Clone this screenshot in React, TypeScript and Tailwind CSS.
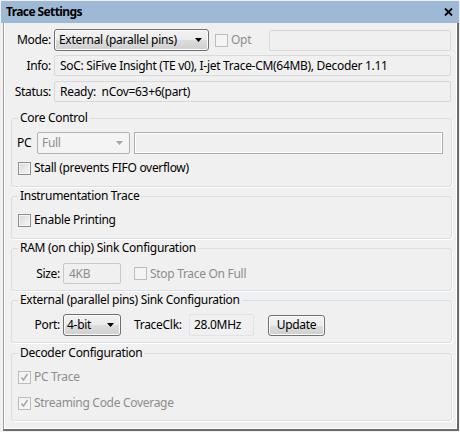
import clsx from 'clsx';
import type { ReactNode } from 'react';

function Arrow({ disabled }: { disabled?: boolean }) {
  return (
    <svg width="7" height="4" viewBox="0 0 7 4" className="shrink-0">
      <path d="M0 0h7L3.5 4z" fill={disabled ? '#a6a6a6' : '#000'} />
    </svg>
  );
}

function Checkbox({ checked, disabled }: { checked?: boolean; disabled?: boolean }) {
  return (
    <span
      className={clsx(
        'flex h-[13px] w-[13px] shrink-0 items-center justify-center border',
        disabled
          ? 'border-[#bcbcbc] bg-[#f4f4f4]'
          : 'border-[#8e8f8f] bg-[linear-gradient(135deg,#d6d9de,#f7f7f7)] shadow-[inset_0_0_0_1px_#f4f4f4]'
      )}
    >
      {checked && (
        <svg width="9" height="9" viewBox="0 0 9 9">
          <path d="M1.5 4.5l2 2.5 4-6" fill="none" stroke="#a3a3a3" strokeWidth="1.4" />
        </svg>
      )}
    </span>
  );
}

function Group({ title, className, children }: { title: string; className: string; children: ReactNode }) {
  return (
    <fieldset
      className={clsx(
        'ml-[7px] mr-[5px] rounded-[3px] border border-[#d5dfe5] shadow-[1px_1px_0_#ffffff]',
        className
      )}
    >
      <legend className="ml-[6px] px-[2px] leading-[16px] text-[#000]">{title}</legend>
      {children}
    </fieldset>
  );
}

export default function App() {
  return (
    <div className="flex h-[432px] w-[460px] flex-col bg-[#f0f0f0] p-px font-['Noto_Sans','Open_Sans',sans-serif] text-[12px] leading-[16px] tracking-[-0.3px] text-[#000]">
      <div className="flex h-[22px] shrink-0 items-center justify-between bg-[#9db9d6] pl-[5px] pr-[6px]">
        <span className="font-bold tracking-[-0.6px]">Trace Settings</span>
        <svg width="9" height="8" viewBox="0 0 9 8">
          <path d="M1 0.5l7 7M8 0.5l-7 7" stroke="#000" strokeWidth="1.8" />
        </svg>
      </div>

      <div className="flex flex-1 flex-col pl-[2px]">
        <div className="flex flex-1 flex-col border-b-2 border-l border-r-2 border-[#a0a0a0] border-b-[#6b6b6b] border-r-[#6b6b6b] shadow-[inset_-1px_-1px_0_#ffffff,inset_1px_0_0_#ffffff]">
          <div className="mt-[6px] flex h-[22px] items-center pr-[6px]">
            <span className="w-[47px] text-right">Mode:</span>
            <div className="ml-[3px] flex h-[22px] w-[155px] items-center justify-between rounded-[3px] border border-[#707070] bg-[linear-gradient(#f2f2f2_0%,#ebebeb_50%,#dddddd_51%,#cfcfcf_100%)] pl-[4px] pr-[6px] shadow-[inset_0_0_0_1px_#fbfbfb]">
              <span>External (parallel pins)</span>
              <Arrow />
            </div>
            <span className="ml-[6px]">
              <Checkbox disabled />
            </span>
            <span className="ml-[3px] text-[#8d8d8d]">Opt</span>
            <div className="ml-auto h-[21px] w-[182px] rounded-[2px] border border-[#d9d9d9] bg-[#f0f0f0]" />
          </div>

          <div className="mt-[4px] flex h-[21px] items-center pr-[6px]">
            <span className="w-[47px] text-right">Info:</span>
            <div className="ml-[3px] flex h-[21px] flex-1 items-center rounded-[2px] border border-[#d9d9d9] bg-[#f0f0f0] pl-[5px]">
              SoC: SiFive Insight (TE v0), I-jet Trace-CM(64MB), Decoder 1.11
            </div>
          </div>

          <div className="mt-[5px] flex h-[21px] items-center pr-[6px]">
            <span className="w-[47px] text-right">Status:</span>
            <div className="ml-[3px] flex h-[21px] flex-1 items-center rounded-[2px] border border-[#d9d9d9] bg-[#f0f0f0] pl-[5px]">
              Ready:&nbsp; nCov=63+6(part)
            </div>
          </div>

          <Group title="Core Control" className="mt-[8px] h-[77px]">
            <div className="mt-[6px] flex h-[22px] items-center pl-[5px]">
              <span className="w-[20px]">PC</span>
              <div className="flex h-[22px] w-[93px] items-center justify-between rounded-[2px] border border-[#adb2b5] bg-[#f4f4f4] pl-[4px] pr-[6px]">
                <span className="text-[#8d8d8d]">Full</span>
                <Arrow disabled />
              </div>
              <div className="ml-[4px] h-[22px] w-[309px] border border-[#adadad] bg-[#f0f0f0] shadow-[inset_0_0_0_1px_#ffffff]" />
            </div>
            <div className="mt-[6px] flex h-[16px] items-center pl-[6px]">
              <Checkbox />
              <span className="ml-[3px]">Stall (prevents FIFO overflow)</span>
            </div>
          </Group>

          <Group title="Instrumentation Trace" className="mt-px h-[51px]">
            <div className="mt-[8px] flex h-[16px] items-center pl-[6px]">
              <Checkbox />
              <span className="ml-[3px]">Enable Printing</span>
            </div>
          </Group>

          <Group title="RAM (on chip) Sink Configuration" className="mt-px h-[51px]">
            <div className="mt-[7px] flex h-[21px] items-center">
              <span className="w-[48px] text-right">Size:</span>
              <div className="ml-[3px] flex h-[21px] w-[58px] items-center rounded-[2px] border border-[#c9c9c9] bg-[#f0f0f0] pl-[5px] text-[#8d8d8d]">
                4KB
              </div>
              <span className="ml-[13px]">
                <Checkbox disabled />
              </span>
              <span className="ml-[3px] text-[#8d8d8d]">Stop Trace On Full</span>
            </div>
          </Group>

          <Group title="External (parallel pins) Sink Configuration" className="mt-px h-[51px]">
            <div className="mt-[6px] flex h-[22px] items-center">
              <span className="w-[48px] text-right">Port:</span>
              <div className="ml-[3px] flex h-[22px] w-[58px] items-center justify-between rounded-[3px] border border-[#707070] bg-[linear-gradient(#f2f2f2_0%,#ebebeb_50%,#dddddd_51%,#cfcfcf_100%)] pl-[3px] pr-[6px] shadow-[inset_0_0_0_1px_#fbfbfb]">
                <span>4-bit</span>
                <Arrow />
              </div>
              <span className="ml-[13px] w-[55px]">TraceClk:</span>
              <div className="flex h-[22px] w-[65px] items-center rounded-[2px] border border-[#e3e3e3] bg-[#f0f0f0] pl-[4px]">
                28.0MHz
              </div>
              <button className="ml-[14px] flex h-[21px] w-[57px] items-center justify-center rounded-[3px] border border-[#707070] bg-[linear-gradient(#f2f2f2_0%,#ebebeb_50%,#dddddd_51%,#cfcfcf_100%)] shadow-[inset_0_0_0_1px_#fcfcfc]">
                Update
              </button>
            </div>
          </Group>

          <Group title="Decoder Configuration" className="mt-[2px] h-[76px]">
            <div className="mt-[8px] flex h-[16px] items-center pl-[6px]">
              <Checkbox checked disabled />
              <span className="ml-[3px] text-[#8d8d8d]">PC Trace</span>
            </div>
            <div className="mt-[10px] flex h-[16px] items-center pl-[6px]">
              <Checkbox checked disabled />
              <span className="ml-[3px] text-[#8d8d8d]">Streaming Code Coverage</span>
            </div>
          </Group>
        </div>
      </div>
    </div>
  );
}
